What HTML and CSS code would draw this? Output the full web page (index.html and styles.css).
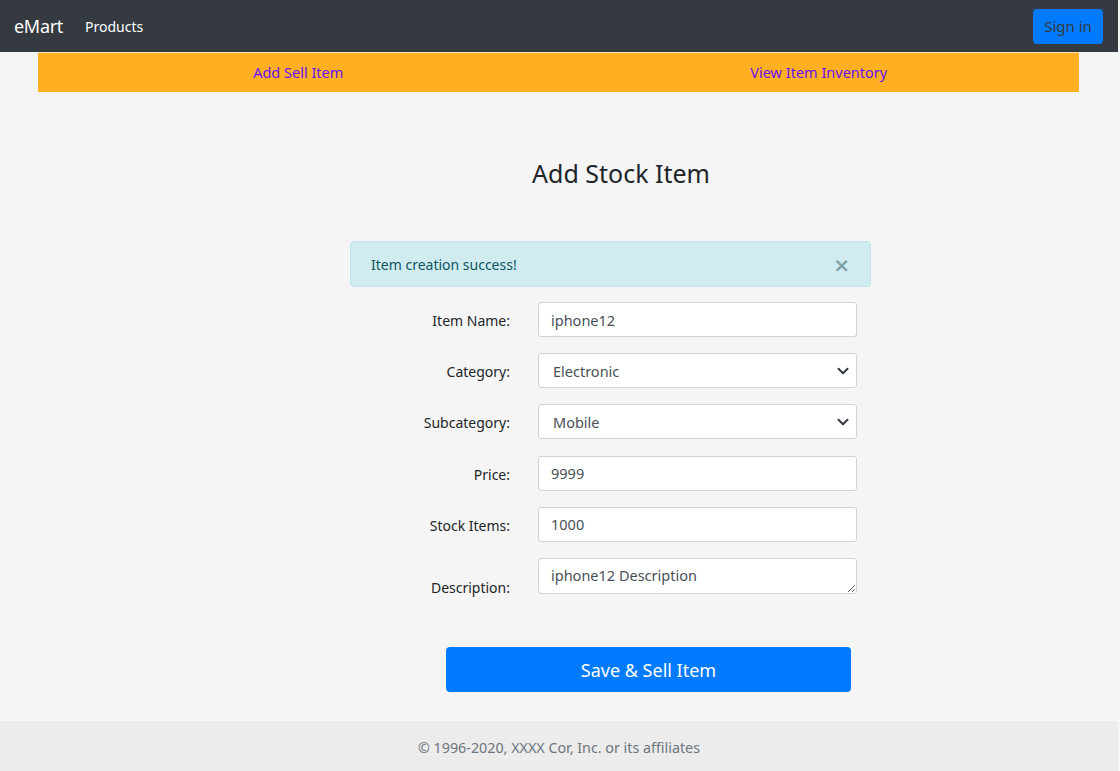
FILE: index.html
```html
<!DOCTYPE html>
<html lang="en">
<head>
<meta charset="utf-8">
<title>eMart - Add Stock Item</title>
<link rel="stylesheet" href="styles.css">
</head>
<body>
<nav class="navbar">
  <a class="brand" href="#">eMart</a>
  <a class="nav-link" href="#">Products</a>
  <span class="spacer"></span>
  <button class="btn-signin" type="button">Sign in</button>
</nav>
<div class="subnav">
  <a class="subnav-link" href="#">Add Sell Item</a>
  <a class="subnav-link" href="#">View Item Inventory</a>
</div>
<main class="content">
  <h4 class="title">Add Stock Item</h4>
  <div class="alert">
    <span>Item creation success!</span>
    <button class="close" type="button" aria-label="Close">&times;</button>
  </div>
  <form class="form">
    <div class="row">
      <label class="label">Item Name:</label>
      <input class="control" type="text" value="iphone12">
    </div>
    <div class="row">
      <label class="label">Category:</label>
      <div class="select-wrap">
        <select class="control select"><option>Electronic</option></select>
        <svg class="chev" width="12" height="8" viewBox="0 0 12 8"><path d="M1.5 1.8 6 6.2 10.5 1.8" fill="none" stroke="#343a40" stroke-width="2" stroke-linecap="round" stroke-linejoin="round"/></svg>
      </div>
    </div>
    <div class="row">
      <label class="label">Subcategory:</label>
      <div class="select-wrap">
        <select class="control select"><option>Mobile</option></select>
        <svg class="chev" width="12" height="8" viewBox="0 0 12 8"><path d="M1.5 1.8 6 6.2 10.5 1.8" fill="none" stroke="#343a40" stroke-width="2" stroke-linecap="round" stroke-linejoin="round"/></svg>
      </div>
    </div>
    <div class="row">
      <label class="label">Price:</label>
      <input class="control" type="text" value="9999">
    </div>
    <div class="row">
      <label class="label">Stock Items:</label>
      <input class="control" type="text" value="1000">
    </div>
    <div class="row row-top">
      <label class="label label-desc">Description:</label>
      <textarea class="control textarea">iphone12 Description</textarea>
    </div>
    <button class="btn-save" type="button">Save &amp; Sell Item</button>
  </form>
</main>
<footer class="footer">© 1996-2020, XXXX Cor, Inc. or its affiliates</footer>
</body>
</html>
```
FILE: styles.css
```css
* { box-sizing: border-box; }
html, body { margin: 0; padding: 0; }
body {
  background: #f5f5f5;
  font-family: "Noto Sans", "Open Sans", sans-serif;
  font-size: 14px;
  color: #212529;
  width: 1118px;
}
.navbar {
  height: 52px;
  background: #343a40;
  display: flex;
  align-items: center;
  padding: 0 15px 0 14px;
}
.brand {
  color: #fff;
  font-size: 18px;
  text-decoration: none;
  margin-right: 22px;
  letter-spacing: -0.3px;
}
.nav-link {
  color: #fff;
  font-size: 14px;
  text-decoration: none;
}
.spacer { flex: 1; }
.btn-signin {
  width: 70px;
  height: 35px;
  background: #007bff;
  border: none;
  border-radius: 4px;
  color: #343a40;
  font-family: inherit;
  font-size: 15px;
  padding: 0;
}
.subnav {
  margin: 0 39px 0 38px;
  height: 40px;
  background: #ffb020;
  border-top: 1px solid #fde9b8;
  display: flex;
  align-items: center;
}
.subnav-link {
  flex: 1;
  text-align: center;
  color: #6610f2;
  text-decoration: none;
  font-size: 14.5px;
  padding-bottom: 1px;
}
.content {
  margin-left: 350px;
  width: 521px;
  padding-top: 66px;
}
.title {
  margin: 0;
  font-size: 25px;
  font-weight: 400;
  line-height: 30px;
  text-align: center;
  padding-left: 21px;
  color: #212529;
}
.alert {
  margin-top: 53px;
  height: 46px;
  background: #d1ecf1;
  border: 1px solid #bee5eb;
  border-radius: 4px;
  color: #0c5460;
  display: flex;
  align-items: center;
  padding: 0 20px 0 20px;
  font-size: 14px;
}
.alert span { flex: 1; }
.close {
  background: none;
  border: none;
  padding: 0;
  font-family: "DejaVu Sans", sans-serif;
  font-size: 20px;
  font-weight: 700;
  line-height: 1;
  color: #6c8f96;
  opacity: 0.8;
  margin-top: 2px;
}
.form {
  margin-top: 15px;
  display: flex;
  flex-direction: column;
  gap: 16.2px;
}
.row {
  display: flex;
  align-items: center;
  gap: 28px;
}
.row-top { align-items: flex-start; }
.label {
  width: 160px;
  text-align: right;
  font-size: 14px;
  line-height: 21px;
  color: #212529;
  padding-top: 2px;
}
.label-desc { padding-top: 19px; }
.control {
  width: 319px;
  height: 35px;
  border: 1px solid #ced4da;
  border-radius: 3px;
  background: #fff;
  font-family: inherit;
  font-size: 14.5px;
  color: #495057;
  padding: 0 12px;
  margin: 0;
}
.select-wrap {
  position: relative;
  width: 319px;
  height: 35px;
}
.select {
  appearance: none;
  -webkit-appearance: none;
  padding-left: 14px;
}
.chev {
  position: absolute;
  right: 8px;
  top: 14px;
}
.textarea {
  height: 36px;
  padding: 6px 12px;
  line-height: 21px;
  resize: vertical;
  display: block;
}
.btn-save {
  margin-top: 33px;
  margin-left: 96px;
  width: 405px;
  height: 45px;
  background: #007bff;
  border: none;
  border-radius: 4px;
  color: #fff;
  font-family: inherit;
  font-size: 18px;
}
.footer {
  margin-top: 29px;
  height: 50px;
  background: #ececec;
  color: #6c757d;
  font-size: 14.3px;
  display: flex;
  align-items: center;
  justify-content: center;
  padding-top: 2px;
}
```
